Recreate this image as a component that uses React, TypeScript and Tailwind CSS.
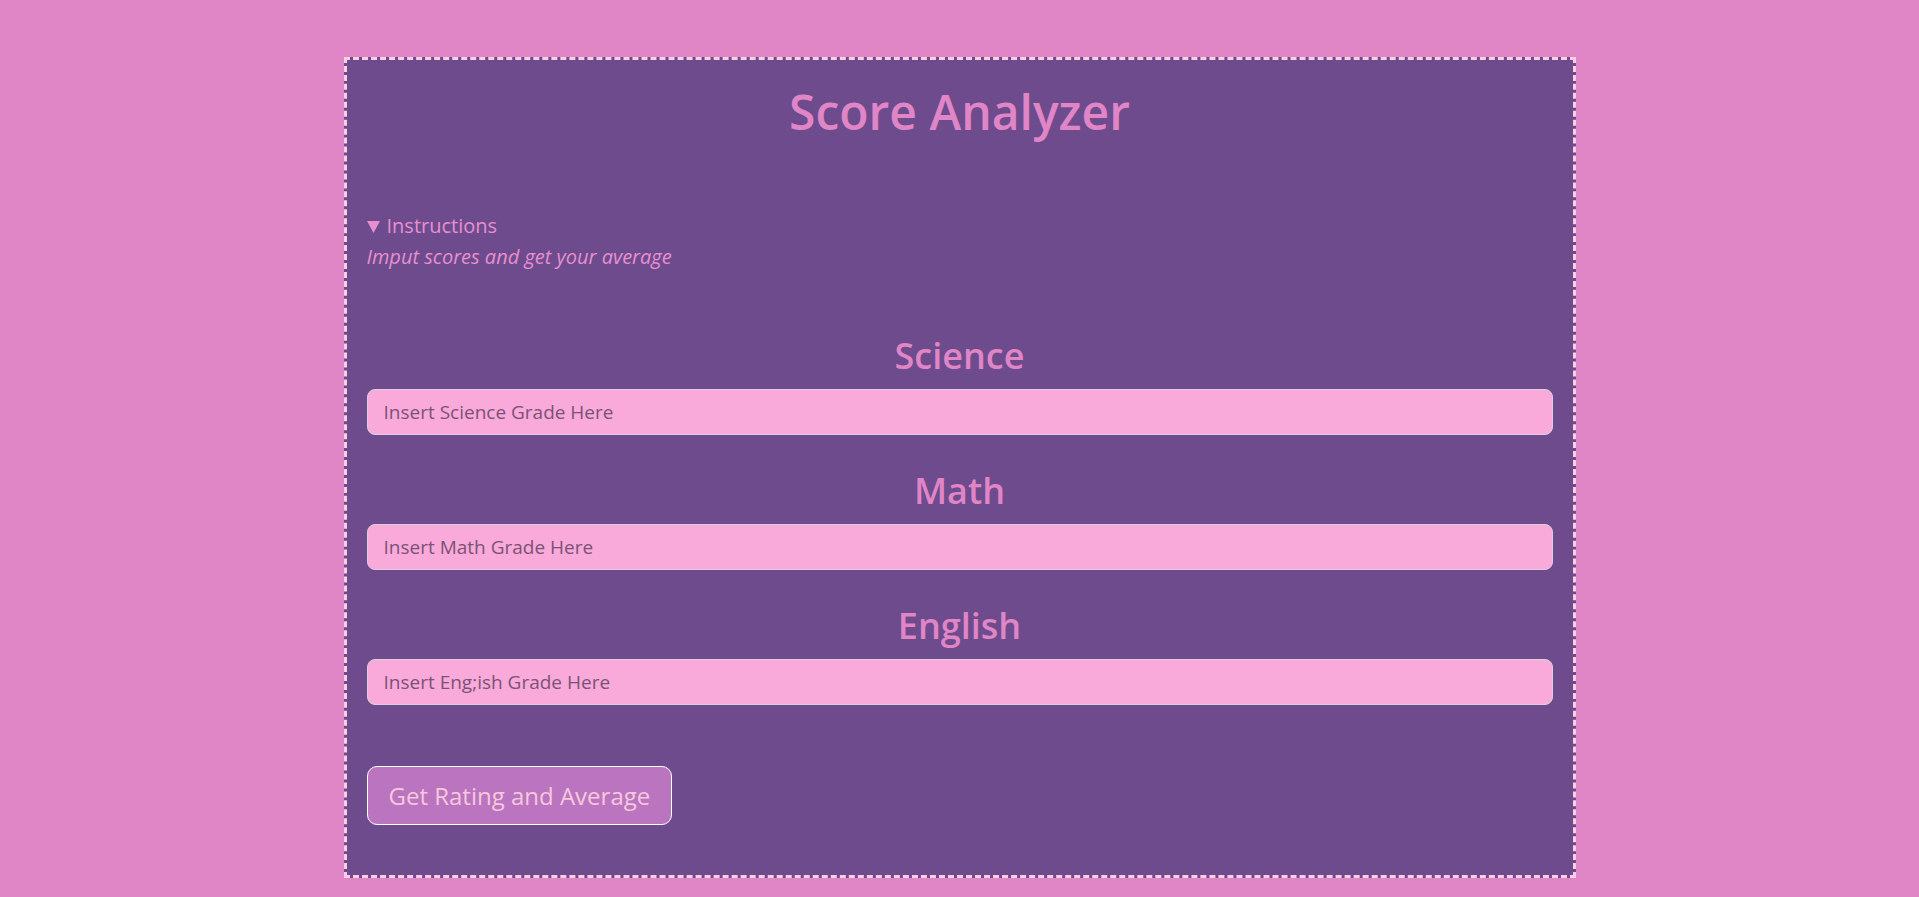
import { useState } from "react";

const subjects = [
  { name: "Science", placeholder: "Insert Science Grade Here" },
  { name: "Math", placeholder: "Insert Math Grade Here" },
  { name: "English", placeholder: "Insert Eng;ish Grade Here" },
];

export default function App() {
  const [scores, setScores] = useState<Record<string, string>>({});

  return (
    <div className="min-h-screen bg-[#e085c5] pt-[57px] pb-[19px] font-['Segoe_UI','Open_Sans',sans-serif]">
      <div className="mx-auto w-[1232px] border-[3px] border-dashed border-[#f9d0e3] bg-[#6d4b8d] px-5 pt-5 pb-[50px]">
        {/* Header */}
        <h1 className="mt-[3px] text-center text-[48px] leading-[58px] font-semibold text-[#e085c5]">
          Score Analyzer
        </h1>

        {/* Instructions */}
        <div className="mt-[71px] text-[20px] leading-[28px] text-[#e78fd0]">
          <div className="flex items-center">
            <svg width="13" height="12" viewBox="0 0 13 12" className="mr-[7px] mt-[1px] fill-[#e78fd0]">
              <polygon points="0,0 13,0 6.5,12" />
            </svg>
            <span>Instructions</span>
          </div>
          <p className="mt-[3px] italic">Imput scores and get your average</p>
        </div>

        {/* Score inputs */}
        <div className="mt-[63px] flex flex-col gap-[34px]">
          {subjects.map((s) => (
            <div key={s.name} className="flex flex-col">
              <h2 className="text-center text-[36px] leading-[44px] font-semibold text-[#e085c5]">
                {s.name}
              </h2>
              <input
                type="text"
                value={scores[s.name] ?? ""}
                onChange={(e) => setScores({ ...scores, [s.name]: e.target.value })}
                placeholder={s.placeholder}
                className="mt-[11px] h-[46px] w-full rounded-lg border border-[#d6d0e2] bg-[#f9aadb] px-4 text-[19px] text-[#6a3f63] outline-none placeholder:text-[#7b5274]"
              />
            </div>
          ))}
        </div>

        <button className="mt-[61px] h-[59px] rounded-[10px] border border-white bg-[#bb74c0] px-[21px] text-[24px] text-[#f6c8dc]">
          Get Rating and Average
        </button>
      </div>
    </div>
  );
}
